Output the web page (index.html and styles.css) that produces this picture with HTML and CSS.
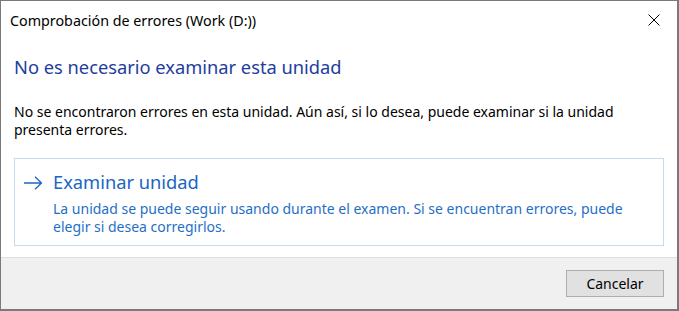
FILE: index.html
```html
<!DOCTYPE html>
<html lang="es">
<head>
  <meta charset="UTF-8" />
  <title>Comprobación de errores (Work (D:))</title>
  <link rel="stylesheet" href="styles.css">
</head>
<body>

  <div class="window">
    <div class="titlebar">
      <span class="title">Comprobación de errores (Work (D:))</span>
      <button class="close" aria-label="Cerrar">
        <svg width="12" height="12" viewBox="0 0 12 12">
          <path d="M0.5 0.5 L11.5 11.5 M11.5 0.5 L0.5 11.5" stroke="#000" stroke-width="1" fill="none" />
        </svg>
      </button>
    </div>

    <div class="content">
      <h1>No es necesario examinar esta unidad</h1>
      <p class="info">No se encontraron errores en esta unidad. Aún así, si lo desea, puede examinar si la unidad presenta errores.</p>

      <div class="command-link">
        <svg class="arrow" width="20" height="14" viewBox="0 0 20 14">
          <path d="M1 7 H18.5 M12 0.8 L18.5 7 L12 13.2" stroke="#1a66c2" stroke-width="1.3" fill="none" />
        </svg>
        <div class="link-text">
          <div class="link-title">Examinar unidad</div>
          <div class="link-desc">La unidad se puede seguir usando durante el examen. Si se encuentran errores, puede elegir si desea corregirlos.</div>
        </div>
      </div>
    </div>

    <div class="footer">
      <button class="btn">Cancelar</button>
    </div>
  </div>

</body>
</html>
```

FILE: styles.css
```css
body {
  margin: 0;
  background: #fff;
  font-family: 'Noto Sans', 'Open Sans', sans-serif;
}

.window {
  box-sizing: border-box;
  width: 679px;
  height: 311px;
  border: 1px solid #7a7a7a;
  border-right-width: 2px;
  border-bottom-width: 2px;
  background: #fff;
  display: flex;
  flex-direction: column;
}

.titlebar {
  height: 38px;
  display: flex;
  align-items: center;
  justify-content: space-between;
  padding-left: 9px;
}

.title {
  font-size: 14.3px;
  color: #000;
}

.close {
  width: 46px;
  height: 38px;
  border: none;
  background: transparent;
  display: flex;
  align-items: center;
  justify-content: center;
  padding: 0;
}

.content {
  padding: 0 13px;
}

h1 {
  margin: 14px 0 0;
  font-size: 18.3px;
  line-height: 28px;
  font-weight: normal;
  color: #1e3d9e;
}

.info {
  margin: 22px 0 0;
  font-size: 14px;
  line-height: 18px;
  color: #000;
}

.command-link {
  margin-top: 19px;
  border: 1px solid #c5dbec;
  display: flex;
  align-items: flex-start;
  gap: 10px;
  padding: 10px 10px 9px 8px;
}

.arrow {
  flex-shrink: 0;
  margin-top: 7px;
}

.link-title {
  font-size: 18.3px;
  line-height: 26px;
  color: #1a66c2;
}

.link-desc {
  margin-top: 5px;
  font-size: 14px;
  line-height: 18px;
  color: #1f6fc6;
}

.footer {
  margin-top: auto;
  height: 51px;
  background: #f0f0f0;
  border-top: 1px solid #dfdfdf;
  display: flex;
  align-items: center;
  justify-content: flex-end;
  padding-right: 13px;
}

.btn {
  width: 98px;
  height: 27px;
  background: #e1e1e1;
  border: 1px solid #adadad;
  font-family: inherit;
  font-size: 14px;
  color: #000;
  padding: 0;
}
```
